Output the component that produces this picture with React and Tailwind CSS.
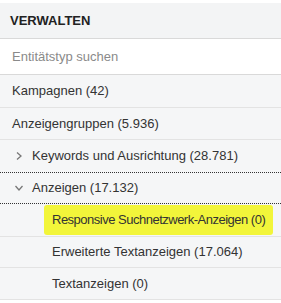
export default function App() {
  const font = { fontFamily: "'Liberation Sans', Arial, sans-serif" };
  return (
    <div className="w-[281px] h-[303px] bg-white pt-[3px] overflow-hidden text-[13px] text-[#333] whitespace-nowrap" style={font}>
      <div className="h-[36px] bg-[#f3f4f5] flex items-center pl-[10px] font-bold text-[#222] border-b border-[#d9d9d9]">
        VERWALTEN
      </div>
      <div className="h-[36px] bg-white flex items-center pl-[12px] text-[#8a8a8a] border-b border-[#d9d9d9]">
        Entitätstyp suchen
      </div>
      <div className="h-[33px] bg-[#f5f6f7] flex items-center pl-[12px] border-b border-[#e3e3e3]">
        Kampagnen (42)
      </div>
      <div className="h-[32px] bg-[#f5f6f7] flex items-center pl-[12px] border-b border-[#e3e3e3]">
        Anzeigengruppen (5.936)
      </div>
      <div className="h-[33px] bg-[#f5f6f7] flex items-center pl-[14px] border-b border-dotted border-[#333]">
        <svg width="10" height="10" viewBox="0 0 10 10" className="mr-[8px]">
          <path d="M3 1.5 L7 5 L3 8.5" fill="none" stroke="#777" strokeWidth="1.3" />
        </svg>
        Keywords und Ausrichtung (28.781)
      </div>
      <div className="h-[31px] bg-[#f5f6f7] flex items-center pl-[14px] border-b border-dotted border-[#333]">
        <svg width="10" height="10" viewBox="0 0 10 10" className="mr-[8px]">
          <path d="M1.5 3 L5 7 L8.5 3" fill="none" stroke="#777" strokeWidth="1.3" />
        </svg>
        Anzeigen (17.132)
      </div>
      <div className="h-[33px] bg-[#f5f6f7] flex items-center pl-[44px] border-b border-[#e3e3e3]">
        <span className="bg-[#f2f53a] px-[8px] py-[5px] rounded-[3px] tracking-[-0.5px]">Responsive Suchnetzwerk-Anzeigen (0)</span>
      </div>
      <div className="h-[31px] bg-[#f5f6f7] flex items-center pl-[52px] border-b border-[#e3e3e3]">
        Erweiterte Textanzeigen (17.064)
      </div>
      <div className="h-[32px] bg-[#f5f6f7] flex items-center pl-[52px] border-b border-[#e3e3e3]">
        Textanzeigen (0)
      </div>
    </div>
  );
}
